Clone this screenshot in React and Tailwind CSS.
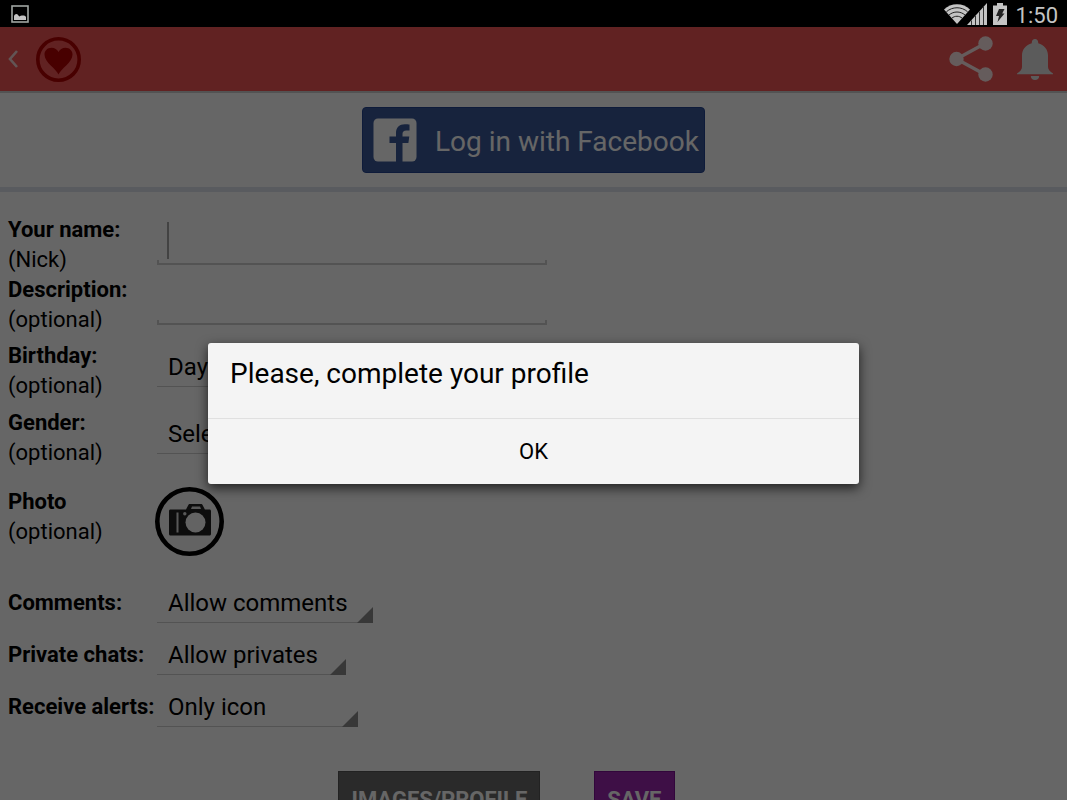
import React, { useState } from "react";

const PictureIcon = () => (
  <svg className="w-[18px] h-[18px]" viewBox="0 0 18 18" fill="none">
    <rect x="1" y="1" width="16" height="16" stroke="#a0a5a2" strokeWidth="1.6" />
    <path
      d="M3 15v-3.5c0-1.6 1.2-2.6 2.4-2.6 1 0 1.6.7 2.2 1.8l1 .8c.8-.8 1.8-1.1 3-.9 1.600.1 2.800.4 3.400 1.400v3z"
      fill="#c4c4c4"
    />
  </svg>
);

const WifiIcon = () => (
  <svg className="w-[26px] h-[20px]" viewBox="0 0 26 20">
    <path d="M13 20 0 5.500C3.500 2 8 .2 13 .2S22.500 2 26 5.500z" fill="#c4c4c4" />
    <g fill="none" stroke="#222" strokeWidth="1">
      <path d="M2.400 7.800c6-5.400 15.200-5.400 21.200 0" />
      <path d="M5 11c4.600-4 11.400-4 16 0" />
      <path d="M7.800 14.200c3-2.600 7.400-2.600 10.400 0" />
    </g>
  </svg>
);

const SignalIcon = () => (
  <svg className="w-[20px] h-[22px] -ml-[3px]" viewBox="0 0 20 22">
    <path d="M0 22 20 0v22z" fill="#c4c4c4" />
    <path d="M4.500 17.500V22M8.500 13v9M12.500 8.500V22M16.500 4v18" stroke="#333" strokeWidth="1" />
  </svg>
);

const BatteryIcon = () => (
  <svg className="w-[14px] h-[22px] ml-[6px]" viewBox="0 0 14 22">
    <path d="M4 0h6v2.500h4V22H0V2.500h4z" fill="#c4c4c4" />
    <path d="M6 6h5.500L9.200 10.500h2.300L4.500 19l1.500-6H3z" fill="#222" />
  </svg>
);

const HeartLogo = () => (
  <svg className="w-[45px] h-[45px]" viewBox="0 0 45 45">
    <circle cx="22.500" cy="22.500" r="20.700" fill="none" stroke="#b40000" strokeWidth="3.600" />
    <path
      d="M22.500 37.500C20.500 32 8.500 25.500 8.500 17.500c0-4 3-6.800 7-6.800 3.200 0 5.700 1.600 7 4.300 1.300-2.700 3.800-4.300 7-4.300 4 0 7 2.800 7 6.800 0 8-12 14.500-14 20z"
      fill="#b40000"
    />
  </svg>
);

const ShareIcon = () => (
  <svg className="w-[44px] h-[46px]" viewBox="0 0 44 46" fill="#fde6e6">
    <path d="M36 7.500 7.500 23 36 38.500" fill="none" stroke="#fde6e6" strokeWidth="3.400" />
    <circle cx="36.500" cy="7.500" r="7.200" />
    <circle cx="7.500" cy="23" r="7.200" />
    <circle cx="36.500" cy="38.500" r="7.200" />
  </svg>
);

const BellIcon = () => (
  <svg className="w-[36px] h-[41px]" viewBox="0 0 36 41" fill="#e4e4e4">
    <path d="M18 0c1.900 0 3.200 1.400 3.200 3.200v1C27 5.500 31 10.500 31 16.500V28c0 2.500 2 4.500 5 6.500v.8H0v-.8C3 32.500 5 30.500 5 28V16.500C5 10.500 9 5.500 14.800 4.200v-1C14.800 1.400 16.100 0 18 0z" />
    <path d="M13.800 37h8.400c0 2.400-1.800 4-4.200 4s-4.200-1.600-4.200-4z" />
  </svg>
);

const FacebookIcon = () => (
  <svg className="w-[44px] h-[44px]" viewBox="0 0 44 44">
    <rect x=".5" y=".5" width="43" height="43" rx="4.500" fill="#fff" />
    <path
      d="M23 44V25h-6.500v-6.500H23V15c0-6 3.500-8.800 8.800-8.800 2 0 3.700.1 4.700.3v5.900h-3.100c-2.800 0-3.900 1.300-3.900 3.500v2.600h6.800L35.400 25h-5.900v19z"
      fill="#3b5998"
    />
  </svg>
);

const CameraIcon = () => (
  <svg className="w-[69px] h-[69px]" viewBox="0 0 69 69">
    <circle cx="34.500" cy="34.500" r="32.200" fill="#f8f8f8" stroke="#000" strokeWidth="4.600" />
    <path
      d="M15.500 22.500H31l2.200-4.300c.3-.7.900-1.200 1.700-1.200H46c.8 0 1.400.5 1.700 1.200l2.200 4.300h4.600c.9 0 1.500.6 1.500 1.500v23c0 .9-.6 1.500-1.500 1.500h-39c-.9 0-1.500-.6-1.500-1.500V24c0-.9.6-1.500 1.500-1.500z"
      fill="#222"
    />
    <path d="M37 19.500h8l1 2.500H36z" fill="#ddd" />
    <path d="M22.500 25.500v20" stroke="#ddd" strokeWidth="2" />
    <circle cx="29.800" cy="26.800" r="1.700" fill="#ddd" />
    <circle cx="40.500" cy="35.500" r="10" fill="#f8f8f8" />
  </svg>
);

const TextField = ({ id, label, hint, caret }) => {
  const [value, setValue] = useState("");

  return (
    <div className="flex h-[60px]">
      <label htmlFor={id} className="w-[149px] shrink-0">
        <b>{label}</b>
        <br />
        {hint}
      </label>
      <div className="relative w-[390px]">
        <input
          id={id}
          type="text"
          value={value}
          onChange={(e) => setValue(e.target.value)}
          className="block w-full h-[45px] px-[11px] text-2xl outline-none bg-transparent"
        />
        <div className="h-[5px] border-x-2 border-b-2 border-[#d0d0d0]" />
        {caret && (
          <span className="absolute left-[10px] top-[7px] w-[2px] h-[37px] bg-[#a8a8a8]" />
        )}
      </div>
    </div>
  );
};

const Spinner = ({ id, options, className }) => (
  <div className={`relative h-[46px] border-b border-[#d0d0d0] ${className}`}>
    <select
      id={id}
      className="block w-full h-full pt-[6px] pl-[11px] appearance-none text-2xl outline-none bg-transparent"
    >
      {options.map((option) => (
        <option key={option}>{option}</option>
      ))}
    </select>
    <svg
      className="absolute right-0 -bottom-px w-4 h-4 pointer-events-none"
      viewBox="0 0 16 16"
    >
      <path d="M16 0v16H0z" fill="#8c8c8c" />
    </svg>
  </div>
);

const App = () => {
  const [showDialog, setShowDialog] = useState(true);

  return (
    <div className="h-screen flex flex-col overflow-hidden bg-white text-black font-[Roboto,sans-serif]">
      <div className="h-[27px] shrink-0 bg-black flex items-center justify-between pl-[11px] pr-[9px]">
        <PictureIcon />
        <div className="flex items-center">
          <WifiIcon />
          <SignalIcon />
          <BatteryIcon />
          <span className="ml-[9px] pt-1 text-[22px] leading-6 text-[#c4c4c4]">1:50</span>
        </div>
      </div>

      <div className="relative flex-1 flex flex-col min-h-0 overflow-hidden">
        <header className="h-[66px] shrink-0 bg-[#f25555] border-b-2 border-[#cfcfcf] flex items-center justify-between pl-2 pr-[14px]">
          <button type="button" aria-label="Back" className="flex items-center gap-[17px]">
            <svg className="w-[11px] h-[18px]" viewBox="0 0 11 18" fill="none">
              <path d="M9 1 2 9l7 8" stroke="#f5d5d5" strokeWidth="2.600" />
            </svg>
            <HeartLogo />
          </button>
          <div className="flex items-center gap-6">
            <button type="button" aria-label="Share">
              <ShareIcon />
            </button>
            <button type="button" aria-label="Alerts">
              <BellIcon />
            </button>
          </div>
        </header>

        <div className="shrink-0 flex justify-center py-[14px] border-b-5 border-[#dfe3ee]">
          <button
            type="button"
            className="h-[66px] flex items-center gap-[18px] pl-[10px] pr-[5px] rounded border border-[#254591] bg-[#3b5998] text-white text-[28px]"
          >
            <FacebookIcon />
            <span className="pt-[3px]">Log in with Facebook</span>
          </button>
        </div>

        <form className="pt-[23px] pl-2 text-[22px] leading-[30px]" onSubmit={(e) => e.preventDefault()}>
          <TextField id="nick" label="Your name:" hint="(Nick)" caret />
          <TextField id="description" label="Description:" hint="(optional)" />

          <div className="flex h-[60px] mt-[6px]">
            <label htmlFor="day" className="w-[149px] shrink-0">
              <b>Birthday:</b>
              <br />
              (optional)
            </label>
            <Spinner id="day" options={["Day"]} className="w-[120px]" />
          </div>

          <div className="flex h-[60px] mt-[7px]">
            <label htmlFor="gender" className="w-[149px] shrink-0">
              <b>Gender:</b>
              <br />
              (optional)
            </label>
            <Spinner id="gender" options={["Select"]} className="w-[120px]" />
          </div>

          <div className="flex h-[69px] mt-[19px]">
            <span className="w-[147px] shrink-0">
              <b>Photo</b>
              <br />
              (optional)
            </span>
            <button type="button" aria-label="Add photo">
              <CameraIcon />
            </button>
          </div>

          <div className="flex flex-col gap-[6px] mt-[21px]">
            <div className="flex">
              <label htmlFor="comments" className="w-[149px] pt-[11px] shrink-0 font-bold">
                Comments:
              </label>
              <Spinner id="comments" options={["Allow comments"]} className="w-[216px]" />
            </div>
            <div className="flex">
              <label htmlFor="chats" className="w-[149px] pt-[11px] shrink-0 font-bold">
                Private chats:
              </label>
              <Spinner id="chats" options={["Allow privates"]} className="w-[189px]" />
            </div>
            <div className="flex">
              <label htmlFor="alerts" className="w-[149px] pt-[11px] shrink-0 font-bold">
                Receive alerts:
              </label>
              <Spinner id="alerts" options={["Only icon"]} className="w-[201px]" />
            </div>
          </div>

          <div className="flex justify-center gap-[54px] mt-[44px] pr-[62px] font-bold text-white">
            <button type="button" className="h-[58px] px-3 border border-[#555] bg-[#696969]">
              IMAGES/PROFILE
            </button>
            <button type="submit" className="h-[58px] px-3 border border-[#7d0f94] bg-[#9c27b0]">
              SAVE
            </button>
          </div>
        </form>

        {showDialog && (
          <div className="absolute inset-0 flex items-center justify-center bg-black/60">
            <div
              role="dialog"
              aria-labelledby="dialog-title"
              className="w-[61%] rounded-[3px] bg-[#f4f4f4] shadow-[0_4px_12px_rgba(0,0,0,0.7)]"
            >
              <h2 id="dialog-title" className="h-[75px] px-[22px] pt-[14px] text-[28px] leading-[34px]">
                Please, complete your profile
              </h2>
              <button
                type="button"
                onClick={() => setShowDialog(false)}
                className="block w-full h-[66px] pb-px border-t border-[#e0e0e0] text-[22px]"
              >
                OK
              </button>
            </div>
          </div>
        )}
      </div>
    </div>
  );
};

export default App;
